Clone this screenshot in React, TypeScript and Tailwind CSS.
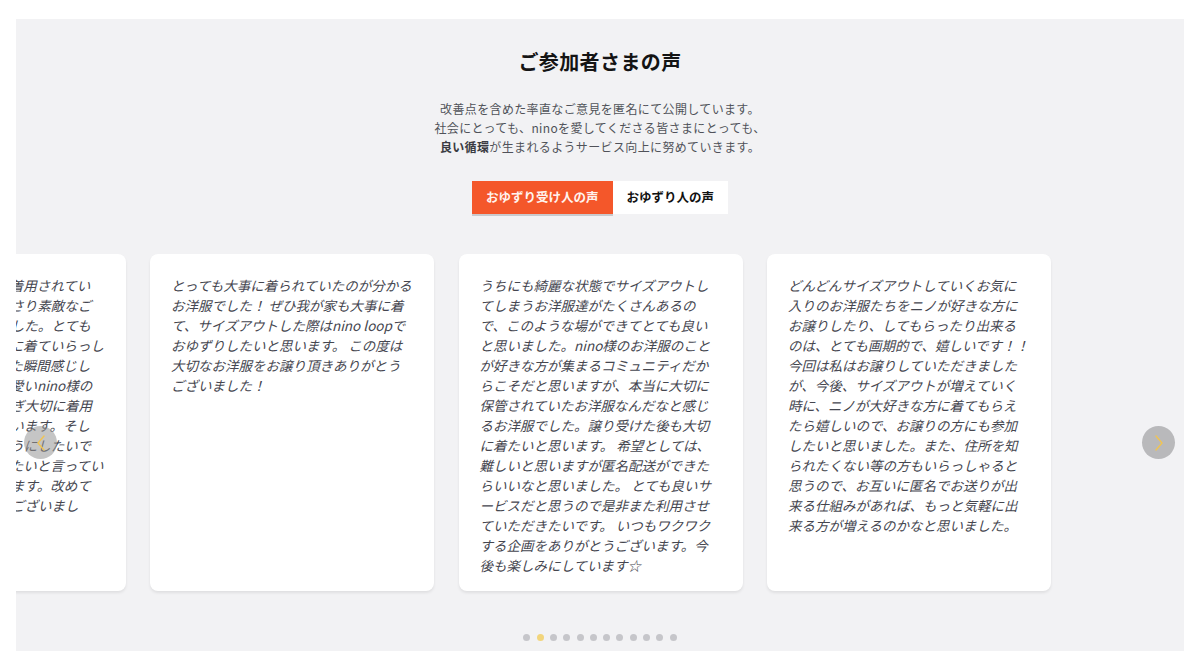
import React from "react";

const FONT = { fontFamily: '"Noto Sans CJK JP", "Noto Sans", sans-serif' };

const voices: string[][] = [
  [
    "お洋服が、とても大切に着用されてい",
    "た事が分かり包んでくださり素敵なご",
    "挨拶の手紙もいただきました。とても",
    "とても可愛くて娘がすぐに着ていらっし",
    "ゃいます。袖を通してみた瞬間感じし",
    "ました。本当にとても可愛いnino様の",
    "お洋服を、次の方へつなぎ大切に着用",
    "させて頂きたいと思っています。そし",
    "て、次の方にも渡せるようにしたいで",
    "す。娘も大事に着ていきたいと言ってい",
    "ました。私も嬉しく思います。改めて",
    "素敵なお洋服ありがとうございまし",
  ],
  [
    "とっても大事に着られていたのが分かる",
    "お洋服でした！ ぜひ我が家も大事に着",
    "て、サイズアウトした際はnino loopで",
    "おゆずりしたいと思います。 この度は",
    "大切なお洋服をお譲り頂きありがとう",
    "ございました！",
  ],
  [
    "うちにも綺麗な状態でサイズアウトし",
    "てしまうお洋服達がたくさんあるの",
    "で、このような場ができてとても良い",
    "と思いました。nino様のお洋服のこと",
    "が好きな方が集まるコミュニティだか",
    "らこそだと思いますが、本当に大切に",
    "保管されていたお洋服なんだなと感じ",
    "るお洋服でした。譲り受けた後も大切",
    "に着たいと思います。 希望としては、",
    "難しいと思いますが匿名配送ができた",
    "らいいなと思いました。 とても良いサ",
    "ービスだと思うので是非また利用させ",
    "ていただきたいです。 いつもワクワク",
    "する企画をありがとうございます。今",
    "後も楽しみにしています☆",
  ],
  [
    "どんどんサイズアウトしていくお気に",
    "入りのお洋服たちをニノが好きな方に",
    "お譲りしたり、してもらったり出来る",
    "のは、とても画期的で、嬉しいです！！",
    "今回は私はお譲りしていただきました",
    "が、今後、サイズアウトが増えていく",
    "時に、ニノが大好きな方に着てもらえ",
    "たら嬉しいので、お譲りの方にも参加",
    "したいと思いました。また、住所を知",
    "られたくない等の方もいらっしゃると",
    "思うので、お互いに匿名でお送りが出",
    "来る仕組みがあれば、もっと気軽に出",
    "来る方が増えるのかなと思いました。",
  ],
];

function Chevron({ dir }: { dir: "left" | "right" }) {
  return (
    <svg width="14" height="18" viewBox="0 0 14 18" fill="none">
      {dir === "right" ? (
        <path d="M4 2 L10 9 L4 16" stroke="#f1c452" strokeWidth="1.4" strokeLinecap="round" strokeLinejoin="round" />
      ) : (
        <path d="M10 2 L4 9 L10 16" stroke="#f1c452" strokeWidth="1.4" strokeLinecap="round" strokeLinejoin="round" />
      )}
    </svg>
  );
}

function VoiceCard({ lines }: { lines: string[] }) {
  return (
    <div className="w-[284px] h-[337px] shrink-0 rounded-[8px] bg-white shadow-[0_2px_3px_rgba(0,0,0,0.08)] px-[21px] pt-[21px]">
      <div className="text-[13.5px] leading-[20px] italic text-[#45464f]">
        {lines.map((l, i) => (
          <div key={i} className="whitespace-nowrap">
            {l}
          </div>
        ))}
      </div>
    </div>
  );
}

export default function App() {
  return (
    <div className="min-h-[663px] bg-white pt-[19px] pb-[12px]" style={FONT}>
      <section className="mx-[16px] h-[632px] bg-[#f2f2f4] flex flex-col items-center overflow-hidden">
        <h2 className="mt-[29px] text-[20px] leading-[28px] font-bold text-[#141414] tracking-[0.02em]">
          ご参加者さまの声
        </h2>
        <div className="mt-[23px] text-center text-[12px] leading-[19px] text-[#505259] tracking-[0.03em]">
          <p>改善点を含めた率直なご意見を匿名にて公開しています。</p>
          <p>社会にとっても、ninoを愛してくださる皆さまにとっても、</p>
          <p>
            <span className="font-bold text-[#3a3b42]">良い循環</span>
            が生まれるようサービス向上に努めていきます。
          </p>
        </div>
        <div className="mt-[25px] flex">
          <button className="h-[33px] px-[14px] bg-[#f4572a] text-[12.5px] font-bold text-[#fff3ee] shadow-[0_2px_0_#c9c9cc]">
            おゆずり受け人の声
          </button>
          <button className="h-[33px] px-[14px] bg-white text-[12.5px] font-bold text-[#111]">
            おゆずり人の声
          </button>
        </div>

        <div className="relative mt-[40px] w-full">
          <div className="flex gap-[24.5px] ml-[-174.5px]">
            {voices.map((v, i) => (
              <VoiceCard key={i} lines={v} />
            ))}
          </div>
          <button className="absolute left-[8px] top-[172px] w-[33px] h-[33px] rounded-full bg-[rgba(150,150,150,0.55)] flex items-center justify-center">
            <Chevron dir="left" />
          </button>
          <button className="absolute right-[9px] top-[172px] w-[33px] h-[33px] rounded-full bg-[#b9b9bb] flex items-center justify-center">
            <Chevron dir="right" />
          </button>
        </div>

        <div className="mt-[43px] flex gap-[6.3px]">
          {Array.from({ length: 12 }).map((_, i) => (
            <span
              key={i}
              className={i === 1 ? "w-[7px] h-[7px] rounded-full bg-[#f2d57c]" : "w-[7px] h-[7px] rounded-full bg-[#c6c6ca]"}
            />
          ))}
        </div>
      </section>
    </div>
  );
}
